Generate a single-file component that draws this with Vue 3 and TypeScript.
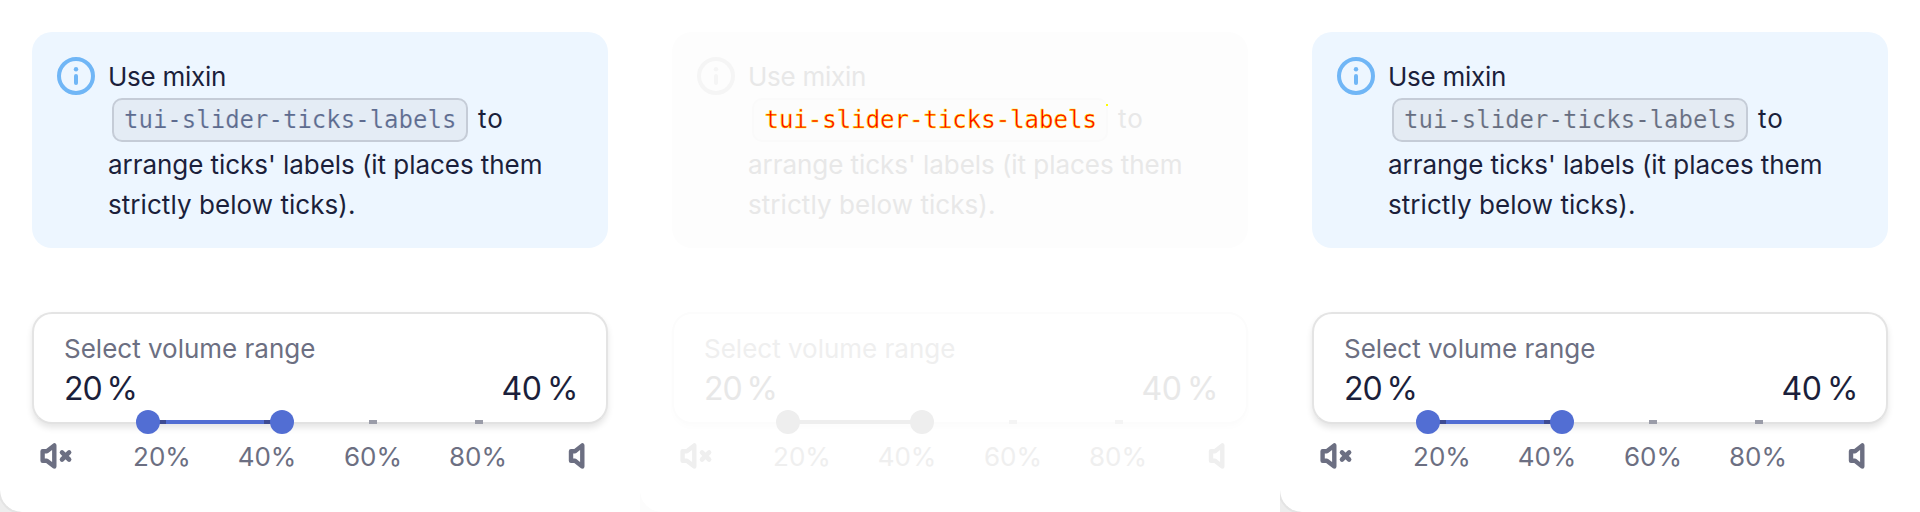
<script setup lang="ts">
interface Panel {
  id: string
  tone: string
}

interface Tick {
  label: string
  cls: string
}

const panels: Panel[] = [
  { id: 'before', tone: 'indigo' },
  { id: 'changes', tone: 'faded' },
  { id: 'after', tone: 'slate' },
]

const ticks: Tick[] = [
  { label: '20%', cls: 't20' },
  { label: '40%', cls: 't40' },
  { label: '60%', cls: 't60' },
  { label: '80%', cls: 't80' },
]
</script>

<template>
  <main class="board">
    <section v-for="panel in panels" :key="panel.id" class="panel" :class="panel.tone">
      <div class="corner"></div>
      <div class="note">
        <svg class="info" viewBox="0 0 40 40" width="40" height="40">
          <circle cx="20" cy="20" r="17" fill="none" stroke="currentColor" stroke-width="4" />
          <circle cx="20" cy="13.3" r="2.2" fill="currentColor" />
          <path d="M20 20v7" stroke="currentColor" stroke-width="4" stroke-linecap="round" />
        </svg>
        <div class="message">
          <div class="line l1"><span>Use mixin</span></div>
          <div class="line code-line"><code>tui-slider-ticks-labels</code><span>to</span></div>
          <div class="line l3"><span>arrange ticks' labels (it places them</span></div>
          <div class="line l4"><span>strictly below ticks).</span></div>
        </div>
      </div>
      <div class="field">
        <div class="caption"><span>Select volume range</span></div>
        <div class="values"><span class="low">20&#8201;%</span><span class="high">40&#8201;%</span></div>
        <i class="tick t60"></i>
        <i class="tick t80"></i>
        <i class="track"></i>
        <i class="thumb from"></i>
        <i class="thumb to"></i>
      </div>
      <div class="labels">
        <svg class="mute" viewBox="0 0 36 28" width="36" height="28" fill="none" stroke="currentColor" stroke-width="4.4" stroke-linecap="round" stroke-linejoin="round">
          <path d="M4.6 9.2H8.8L16.3 3.4V24.6L8.8 18.8H4.6Z" />
          <path d="M24 10.4l7.1 7.1M31.1 10.4L24 17.5" stroke-width="4.6" />
        </svg>
        <span v-for="tick in ticks" :key="tick.label" class="label" :class="tick.cls">{{ tick.label }}</span>
        <svg class="quiet" viewBox="0 0 20 28" width="20" height="28" fill="none" stroke="currentColor" stroke-width="4.4" stroke-linecap="round" stroke-linejoin="round">
          <path d="M4 9.2H8L15.3 3.4V24.6L8 18.8H4Z" />
        </svg>
      </div>
    </section>
  </main>
</template>

<style>
html,
body {
  margin: 0;
  background: #fff;
}
</style>

<style scoped>
.board {
  display: grid;
  grid-template-columns: repeat(3, 640px);
  height: 512px;
  overflow: hidden;
  font-family: Inter, 'Noto Sans', sans-serif;
  color: #1b1f3b;
}
.panel {
  --link: #526ed3;
  --muted: #6c6f82;
  --code: #5d6b8f;
  --code-bg: #e4ecf5;
  position: relative;
  box-sizing: border-box;
  height: 512px;
  padding: 32px;
  overflow: hidden;
  background: #fff;
}
.slate {
  --code: #666d80;
  --code-bg: #e4ebf3;
}
.corner {
  position: absolute;
  left: 0;
  right: -40px;
  top: -40px;
  bottom: 0;
  border-radius: 0 0 0 22px;
  box-shadow: 0 0 0 2px #e4e4e4, 0 2px 6px 20px #ededed;
}
.note {
  position: relative;
  box-sizing: border-box;
  display: flex;
  width: 576px;
  height: 216px;
  padding: 24px;
  border-radius: 20px;
  background: #edf6ff;
}
.info {
  flex: none;
  color: #70b6f6;
}
.message {
  margin-left: 12px;
  font-size: 26px;
  line-height: 42px;
}
.line {
  height: 40px;
  white-space: nowrap;
}
.l1 {
  letter-spacing: -0.27px;
}
.l3 {
  letter-spacing: -0.05px;
}
.l4 {
  letter-spacing: 0.06px;
}
.code-line {
  display: flex;
  align-items: center;
  height: 48px;
}
.code-line span {
  line-height: 40px;
  height: 42px;
  letter-spacing: 1px;
}
code {
  position: relative;
  box-sizing: border-box;
  width: 356px;
  height: 44px;
  margin: 0 10px 0 4px;
  padding: 0 10px;
  border: 2px solid #c5ccd7;
  border-radius: 10px;
  background: var(--code-bg);
  color: var(--code);
  font: 24px/41px 'DejaVu Sans Mono', monospace;
  -webkit-text-stroke: 0.15px var(--code-bg);
}
.field {
  position: relative;
  box-sizing: border-box;
  width: 576px;
  height: 112px;
  margin-top: 64px;
  padding: 19px 32px 0;
  border: 2px solid #e4e4e4;
  border-bottom-color: #e2e2e2;
  border-radius: 20px;
  background: #fff;
  box-shadow: 0 4px 6px rgba(0, 0, 0, 0.1);
}
.caption {
  margin-left: -2px;
  font-size: 26px;
  line-height: 32px;
  color: var(--muted);
}
.values {
  display: flex;
  justify-content: space-between;
  margin: 0 -4px 0 -2px;
  font-size: 32px;
  line-height: 48px;
}
.low {
  letter-spacing: -1px;
}
.high {
  letter-spacing: -0.4px;
}
.tick,
.track,
.thumb {
  position: absolute;
}
.tick {
  top: 106px;
  width: 8px;
  height: 4px;
  background: #9a9ca8;
}
.tick.t60 {
  left: 335px;
}
.tick.t80 {
  left: 441px;
}
.track {
  left: 114px;
  top: 106px;
  width: 134px;
  height: 4px;
  background: linear-gradient(90deg, #3e4c93 18px, var(--link) 18px, var(--link) 116px, #3e4c93 116px);
}
.thumb {
  top: 96px;
  width: 24px;
  height: 24px;
  border-radius: 50%;
  background: var(--link);
}
.from {
  left: 102px;
}
.to {
  left: 236px;
}
.labels {
  position: relative;
  height: 40px;
  margin-top: 12px;
  color: var(--muted);
}
.mute,
.quiet,
.label {
  position: absolute;
}
.mute {
  left: 6px;
  top: 6px;
}
.quiet {
  left: 535px;
  top: 6px;
}
.label {
  top: 0;
  width: 80px;
  text-align: center;
  font-size: 26px;
  line-height: 41px;
}
.label.t20 {
  left: 90px;
}
.label.t40 {
  left: 195px;
}
.label.t60 {
  left: 301px;
}
.label.t80 {
  left: 406px;
}
.faded {
  --link: #eee;
  --muted: #efefef;
  --code: #f00;
  --code-bg: #fcfcfc;
  color: #e8e8e8;
}
.faded .corner {
  box-shadow: 0 0 0 20px #fcfcfc;
}
.faded .note {
  background: #fdfdfd;
}
.faded .info {
  color: #f5f5f5;
}
.faded code {
  border-color: #fafafa;
  padding-left: 10.5px;
  -webkit-text-stroke: 0.45px #ff0;
}
.faded code::after {
  content: '';
  position: absolute;
  top: 4px;
  right: -2px;
  width: 2px;
  height: 2px;
  background: #ff0;
}
.faded .field {
  border-color: #fcfcfc;
  box-shadow: 0 4px 6px rgba(0, 0, 0, 0.01);
}
.faded .tick {
  background: #f4f4f4;
}
.faded .track {
  background: #eee;
}
</style>
